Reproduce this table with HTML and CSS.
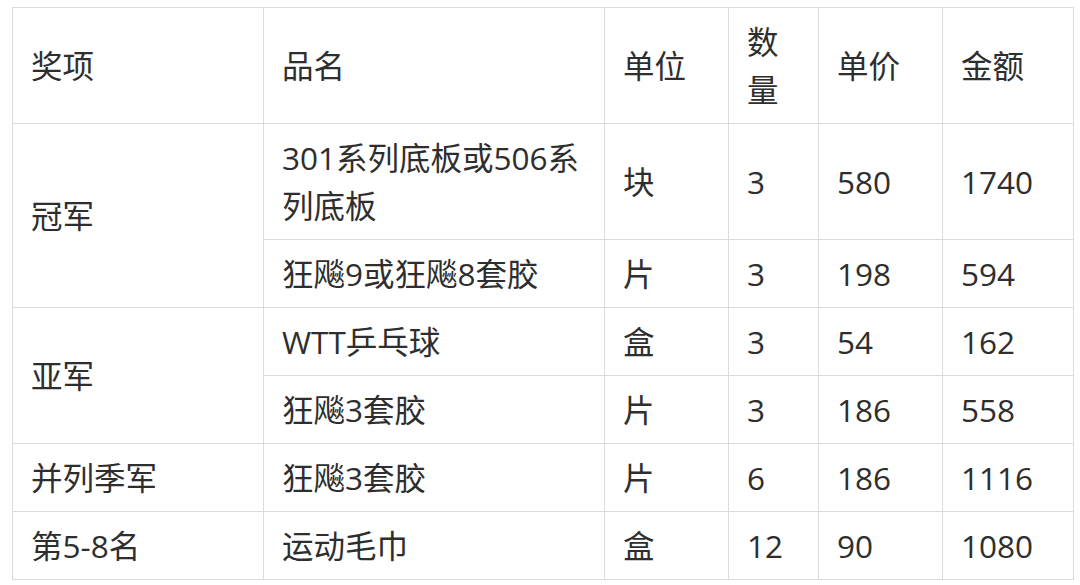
FILE: index.html
```html
<!DOCTYPE html>
<html lang="zh-CN">
<head>
<meta charset="utf-8">
<title>奖品</title>
<link rel="stylesheet" href="styles.css">
</head>
<body>
<table class="prize">
  <colgroup>
    <col class="c1"><col class="c2"><col class="c3"><col class="c4"><col class="c5"><col class="c6">
  </colgroup>
  <tr class="head">
    <td>奖项</td><td>品名</td><td>单位</td><td>数量</td><td>单价</td><td>金额</td>
  </tr>
  <tr>
    <td rowspan="2">冠军</td><td>301系列底板或506系列底板</td><td>块</td><td>3</td><td>580</td><td>1740</td>
  </tr>
  <tr>
    <td>狂飚9或狂飚8套胶</td><td>片</td><td>3</td><td>198</td><td>594</td>
  </tr>
  <tr>
    <td rowspan="2">亚军</td><td>WTT乒乓球</td><td>盒</td><td>3</td><td>54</td><td>162</td>
  </tr>
  <tr>
    <td>狂飚3套胶</td><td>片</td><td>3</td><td>186</td><td>558</td>
  </tr>
  <tr>
    <td>并列季军</td><td>狂飚3套胶</td><td>片</td><td>6</td><td>186</td><td>1116</td>
  </tr>
  <tr>
    <td>第5-8名</td><td>运动毛巾</td><td>盒</td><td>12</td><td>90</td><td>1080</td>
  </tr>
</table>
</body>
</html>
```

FILE: styles.css
```css
html, body {
  margin: 0;
  padding: 0;
  background: #ffffff;
}
body {
  padding: 7px 0 0 12px;
}
.prize {
  border-collapse: collapse;
  table-layout: fixed;
  width: 1061px;
  font-family: "Open Sans", "Noto Sans CJK SC", sans-serif;
  font-size: 31.5px;
  color: #2e2e2e;
}
.c1 { width: 251px; }
.c2 { width: 341px; }
.c3 { width: 124px; }
.c4 { width: 90px; }
.c5 { width: 124px; }
.c6 { width: 131px; }
.prize td {
  border: 1px solid #dadada;
  padding: 10px 14px 9px 18px;
  line-height: 48px;
  vertical-align: middle;
  text-align: left;
  word-break: break-all;
}
```
